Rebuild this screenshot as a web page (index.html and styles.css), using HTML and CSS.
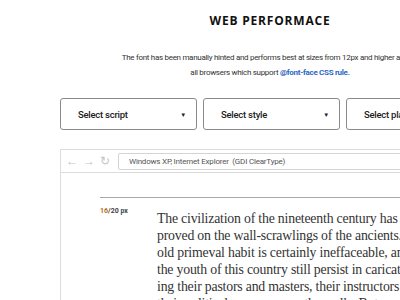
FILE: index.html
```html
<!DOCTYPE html>
<html lang="en">
<head>
    <meta charset="UTF-8">
    <meta name="viewport" content="width=device-width, initial-scale=1.0">
    <title>Web Performace</title>
    <link rel="stylesheet" href="styles.css">
</head>
<body>
    <div class="page">
        <h1 class="title">WEB PERFORMACE</h1>
        <p class="intro">
            The font has been manually hinted and performs best at sizes from 12px and higher across<br>
            all browsers which support <a href="#">@font-face CSS rule.</a>
        </p>

        <div class="selects">
            <div class="select">Select script <span class="caret">&#9660;</span></div>
            <div class="select">Select style <span class="caret">&#9660;</span></div>
            <div class="select">Select platform <span class="caret">&#9660;</span></div>
        </div>

        <div class="browser">
            <div class="toolbar">
                <div class="nav">
                    <span>&#8592;</span>
                    <span>&#8594;</span>
                    <span>&#8635;</span>
                </div>
                <div class="address">Windows XP, Internet Explorer&nbsp; (GDI ClearType)</div>
            </div>
            <div class="viewport">
                <div class="sample">
                    <div class="size"><span class="hl">16</span>/20 px</div>
                    <p class="text">
                        The civilization of the nineteenth century has not much im-<br>
                        proved on the wall-scrawlings of the ancients. The<br>
                        old primeval habit is certainly ineffaceable, and<br>
                        the youth of this country still persist in caricatur-<br>
                        ing their pastors and masters, their instructors and<br>
                        their political governors on the walls. But our
                    </p>
                </div>
            </div>
        </div>
    </div>
</body>
</html>
```

FILE: styles.css
```css
html, body {
    overflow: hidden;
}
body {
    margin: 0;
    background: white;
    font-family: Roboto, sans-serif;
    color: #222;
}
.page {
    width: 420px;
    padding: 0 60px;
}
.title {
    margin: 0;
    padding-top: 12px;
    text-align: center;
    font-family: "Open Sans", sans-serif;
    font-size: 12px;
    font-weight: 700;
    letter-spacing: 0.8px;
    color: #111;
}
.intro {
    margin: 21px -100px 0;
    text-align: center;
    font-size: 8px;
    letter-spacing: -0.3px;
    line-height: 15px;
    color: #333;
    white-space: nowrap;
}
.intro a {
    color: #2d68c4;
    font-weight: 700;
    text-decoration: none;
}
.selects {
    display: flex;
    gap: 6px;
    margin-top: 18px;
}
.select {
    flex: 0 0 137px;
    box-sizing: border-box;
    height: 32px;
    display: flex;
    align-items: center;
    justify-content: space-between;
    padding: 0 10px 0 17px;
    border: 1px solid #8a8a8a;
    border-radius: 3px;
    font-size: 9.5px;
    font-weight: 500;
    letter-spacing: -0.25px;
    white-space: nowrap;
    overflow: hidden;
}
.caret {
    font-size: 6px;
}
.browser {
    margin-top: 19px;
    border: 1px solid #dcdcdc;
    border-bottom: none;
    width: 500px;
}
.toolbar {
    display: flex;
    align-items: center;
    height: 22px;
    border-bottom: 1px solid #dcdcdc;
}
.nav {
    display: flex;
    gap: 5px;
    padding: 0 8px 0 5px;
    font-size: 12px;
    color: #c4c4c4;
}
.address {
    flex: 1;
    height: 15px;
    display: flex;
    align-items: center;
    padding-left: 10px;
    border: 1px solid #d4d4d4;
    border-radius: 2px;
    font-size: 8px;
    letter-spacing: -0.2px;
    color: #555;
}
.viewport {
    padding: 24px 0 0 39px;
    height: 140px;
}
.sample {
    display: flex;
    border-top: 1px solid #a8a8a8;
    padding-top: 9px;
}
.size {
    width: 57px;
    flex-shrink: 0;
    font-size: 7px;
    font-weight: 700;
    color: #444;
}
.hl {
    color: #b0701c;
}
.text {
    margin: 3px 0 0;
    font-family: "Liberation Serif", serif;
    font-size: 13.8px;
    letter-spacing: -0.2px;
    line-height: 17px;
    color: #333;
    white-space: nowrap;
}
```
